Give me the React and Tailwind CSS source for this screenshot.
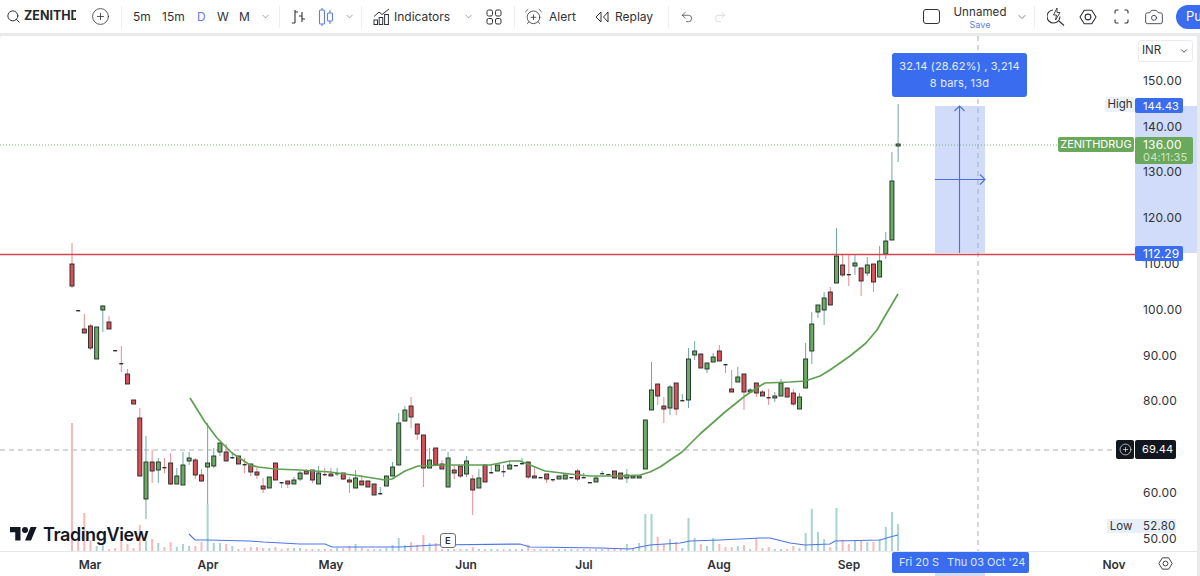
import { Search, CirclePlus, ChevronDown, AlarmClockPlus, Undo2, Redo2, Camera } from "lucide-react";

// [wickTop, bodyTop, bodyBottom, wickBottom, up, volumeTop]
const candles = [
  [243, 264, 286, 288, 0, 423], [310, 310, 311, 311, 0, 540], [314, 329, 333, 333, 0, 513], [324, 326, 348, 350, 0, 540],
  [327, 327, 359, 359, 1, 546], [305, 306, 310, 332, 1, 545], [316, 322, 329, 329, 0, 549], [350, 350, 351, 351, 0, 548],
  [346, 363, 364, 372, 0, 541], [369, 374, 384, 384, 0, 544], [400, 400, 404, 404, 0, 548], [408, 418, 476, 476, 0, 525],
  [436, 462, 499, 519, 1, 541], [450, 462, 471, 483, 0, 539], [458, 462, 470, 483, 1, 543], [458, 467, 468, 473, 0, 547],
  [453, 463, 484, 485, 0, 542], [468, 476, 484, 484, 1, 547], [452, 465, 485, 485, 1, 544], [452, 458, 461, 465, 1, 546],
  [458, 460, 475, 479, 0, 546], [469, 475, 481, 482, 0, 542], [423, 463, 467, 504, 1, 504], [448, 456, 466, 468, 1, 543],
  [443, 443, 452, 456, 1, 543], [444, 452, 461, 461, 0, 544], [452, 457, 458, 459, 1, 546], [456, 456, 464, 464, 0, 549],
  [458, 464, 465, 473, 0, 548], [464, 464, 472, 476, 0, 547], [468, 472, 475, 479, 0, 547], [478, 486, 489, 493, 0, 548],
  [477, 477, 488, 488, 1, 548], [463, 463, 480, 480, 0, 547], [482, 482, 483, 488, 0, 549], [481, 481, 484, 488, 0, 548],
  [477, 480, 484, 484, 1, 548], [471, 473, 479, 481, 1, 548], [469, 471, 474, 474, 0, 549],
  [470, 470, 480, 483, 0, 549], [466, 473, 484, 484, 1, 549], [468, 474, 475, 476, 0, 549], [468, 474, 476, 476, 0, 549],
  [468, 473, 474, 476, 1, 548], [473, 473, 479, 480, 0, 548], [477, 480, 482, 493, 0, 546], [470, 478, 488, 488, 1, 544],
  [475, 481, 485, 485, 0, 548], [481, 481, 487, 487, 0, 549], [484, 484, 495, 495, 0, 549], [487, 493, 494, 495, 1, 549],
  [476, 476, 486, 486, 1, 548], [462, 467, 476, 476, 1, 545], [413, 423, 465, 465, 1, 538], [406, 410, 421, 421, 1, 545],
  [397, 406, 417, 428, 0, 542], [424, 424, 434, 440, 0, 545], [435, 435, 468, 487, 0, 535], [448, 460, 468, 468, 1, 543],
  [448, 448, 465, 465, 0, 543], [460, 464, 469, 469, 0, 549], [452, 458, 487, 487, 1, 549], [465, 470, 473, 479, 0, 549],
  [466, 466, 476, 478, 0, 549], [456, 461, 474, 477, 1, 549], [475, 479, 490, 515, 0, 547], [469, 478, 488, 488, 1, 549],
  [465, 465, 482, 482, 0, 549], [465, 472, 473, 474, 1, 549], [465, 465, 471, 471, 1, 549], [465, 471, 472, 477, 0, 549],
  [462, 465, 469, 469, 1, 549], [465, 465, 466, 466, 1, 549], [458, 463, 464, 464, 1, 549], [462, 462, 477, 479, 0, 545],
  [467, 476, 478, 478, 0, 549], [477, 477, 478, 478, 1, 549], [474, 474, 479, 483, 0, 549], [479, 479, 480, 482, 0, 549],
  [476, 476, 479, 479, 1, 549], [475, 475, 479, 479, 1, 549], [477, 477, 478, 478, 1, 549], [469, 471, 479, 481, 0, 549],
  [473, 477, 478, 478, 1, 549], [482, 482, 483, 483, 0, 549], [476, 478, 482, 482, 1, 549], [471, 473, 474, 474, 1, 549],
  [474, 474, 475, 475, 0, 549], [471, 471, 478, 478, 0, 549], [473, 473, 479, 479, 0, 549], [469, 475, 478, 483, 1, 544],
  [476, 476, 478, 478, 1, 548], [476, 476, 478, 478, 1, 543], [420, 420, 469, 469, 1, 514], [362, 390, 410, 410, 1, 514],
  [384, 384, 396, 405, 0, 537], [397, 406, 409, 423, 0, 544], [385, 387, 408, 415, 1, 539], [383, 383, 409, 415, 0, 542],
  [394, 400, 401, 401, 1, 548], [348, 359, 400, 408, 1, 518], [341, 351, 355, 360, 1, 538], [354, 354, 368, 368, 0, 544],
  [363, 363, 369, 373, 1, 546], [353, 357, 362, 362, 1, 538], [345, 351, 361, 361, 0, 544], [364, 364, 365, 373, 0, 547],
  [370, 389, 392, 392, 0, 547], [367, 377, 382, 382, 1, 546], [374, 374, 392, 410, 0, 545], [388, 390, 392, 392, 1, 549],
  [383, 383, 393, 397, 0, 538], [390, 392, 396, 396, 0, 548], [389, 397, 398, 405, 0, 547], [392, 396, 398, 402, 1, 549],
  [379, 383, 396, 396, 1, 549], [388, 388, 397, 397, 0, 549], [389, 393, 404, 406, 0, 546], [393, 397, 409, 409, 1, 548],
  [343, 359, 388, 388, 1, 533], [312, 324, 351, 364, 1, 509], [305, 305, 312, 318, 1, 532], [292, 298, 310, 325, 1, 539],
  [287, 292, 305, 305, 0, 547], [228, 256, 283, 283, 1, 508], [255, 265, 275, 277, 0, 540], [255, 274, 275, 286, 0, 544],
  [255, 263, 266, 275, 1, 541], [268, 268, 281, 296, 0, 540], [257, 265, 273, 276, 1, 542], [264, 264, 282, 292, 0, 542],
  [246, 261, 277, 277, 1, 539], [232, 241, 254, 259, 1, 527], [152, 181, 240, 240, 1, 512], [104, 144, 146, 162, 1, 524],
];

const greenMa = "M190,398 L205,422 L217,438 L232,453 L250,465 L258,467 L275,469 L300,470 L330,472 L360,476 L385,480 L392,479 L405,471 L418,466 L425,466 L440,465 L490,465 L510,461 L520,461 L530,465 L545,471 L570,474 L590,476 L620,476 L640,475 L650,472 L660,467 L682,452 L700,434 L725,412 L745,396 L760,386 L765,383 L790,382 L805,381 L820,376 L830,370 L850,356 L866,343 L877,330 L885,316 L898,294";
const blueMa = "M189,534 L195,540 L207,540 L250,541 L263,542 L300,544 L325,544 L332,547 L400,547 L435,545 L520,544 L530,547 L600,548 L630,549 L645,546 L650,545 L680,543 L690,541 L720,540 L760,538 L770,538 L790,543 L805,545 L830,544 L835,541 L880,540 L890,537 L898,535";

const ticks = [
  ["150.00", "top-[38px]"],
  ["140.00", "top-[84px]"],
  ["130.00", "top-[129px]"],
  ["120.00", "top-[175px]"],
  ["110.00", "top-[221px]"],
  ["100.00", "top-[267px]"],
  ["90.00", "top-[313px]"],
  ["80.00", "top-[358px]"],
  ["60.00", "top-[450px]"],
  ["50.00", "top-[496px]"],
];

const months = [
  ["Mar", "left-[90px]"],
  ["Apr", "left-[208px]"],
  ["May", "left-[331px]"],
  ["Jun", "left-[466px]"],
  ["Jul", "left-[584px]"],
  ["Aug", "left-[719px]"],
  ["Sep", "left-[849px]"],
  ["Nov", "left-[1114px]"],
];

function Chart() {
  return (
    <svg viewBox="0 36 1135 515" className="block w-[1135px] h-[515px]">
      <rect x="935" y="106" width="50" height="147" fill="#d0dcfa" />
      <line x1="0" x2="1058" y1="145" y2="145" stroke="#7fb079" strokeDasharray="1 2" />
      <line x1="0" x2="1116" y1="450" y2="450" stroke="#a9adb5" strokeDasharray="5 4" />
      <line x1="978" x2="978" y1="36" y2="551" stroke="#a9adb5" strokeDasharray="5 4" />

      {candles.map((c, i) => {
        const x = 72 + i * 6.165;
        return (
          <rect key={i} x={x - 1} y={c[5]} width="2" height={551 - c[5]} fill={c[4] ? "#a8d4cf" : "#f8bab8"} />
        );
      })}
      <path d={blueMa} fill="none" stroke="#4d74e6" strokeWidth="1.1" />

      {candles.map((c, i) => {
        const x = 72 + i * 6.165;
        const flat = c[2] - c[1] <= 1;
        return (
          <g key={i}>
            <line x1={x} x2={x} y1={c[0]} y2={c[3]} stroke={c[4] ? "#6fa8a0" : "#e98a90"} />
            {flat ? (
              <rect x={x - 2} y={c[1]} width="4" height="1.4" fill="#2b2f36" />
            ) : (
              <rect x={x - 2} y={c[1]} width="4" height={c[2] - c[1]} fill={c[4] ? "#6bab63" : "#d9505b"} stroke="#1f2a24" strokeWidth="0.9" />
            )}
          </g>
        );
      })}

      <path d={greenMa} fill="none" stroke="#5fa052" strokeWidth="1.7" strokeLinejoin="round" />
      <line x1="0" x2="1135" y1="254.5" y2="254.5" stroke="#d4434e" strokeWidth="1.6" />

      <g stroke="#4a6fe3" fill="none" strokeWidth="1.1">
        <line x1="959.5" x2="959.5" y1="106" y2="253" />
        <line x1="935" x2="985" y1="179.5" y2="179.5" />
        <path d="M954.5,111 L959.5,106 L964.5,111" />
        <path d="M980,174.5 L985,179.5 L980,184.5" />
      </g>
    </svg>
  );
}

function Divider() {
  return <div className="w-px h-[22px] bg-[#eceef1]" />;
}

function HexGear({ size = 18 }) {
  return (
    <svg width={size} height={size} viewBox="0 0 18 18" fill="none" stroke="#2f3237" strokeWidth="1.1">
      <path d="M5.2,2.2 L12.8,2.2 L17,9 L12.8,15.8 L5.2,15.8 L1,9 Z" strokeLinejoin="round" />
      <circle cx="9" cy="9" r="2.9" />
    </svg>
  );
}

function Toolbar() {
  return (
    <div className="h-[33px] bg-white flex items-center text-[12px] text-[#2f3237] shrink-0 overflow-hidden [&>*]:shrink-0 whitespace-nowrap">
      <Search size={15} strokeWidth={1.6} className="ml-[6px]" />
      <div className="ml-[3px] w-[52px] overflow-hidden font-bold text-[12.5px] text-[#25282d]">ZENITHD</div>
      <CirclePlus size={19} strokeWidth={1} className="ml-[15px]" />
      <div className="ml-[11px]"><Divider /></div>
      <span className="ml-[11px] w-[18px]">5m</span>
      <span className="ml-[11px] w-[26px]">15m</span>
      <span className="ml-[9px] w-[10px] text-[#5d7fe6]">D</span>
      <span className="ml-[10px] w-[12px]">W</span>
      <span className="ml-[10px] w-[11px]">M</span>
      <ChevronDown size={11} strokeWidth={1.5} className="ml-[10px] text-[#777]" />
      <div className="ml-[8px]"><Divider /></div>
      <svg width="15" height="18" viewBox="0 0 15 18" fill="none" stroke="#2f3237" strokeWidth="1.1" className="ml-[11px]">
        <path d="M4,2 V15 M4,4 H7 M1,15 H4 M11,4 V14 M8,8 H11 M11,11 H14" />
      </svg>
      <svg width="16" height="20" viewBox="0 0 16 20" fill="none" stroke="#5d7fe6" strokeWidth="1.1" className="ml-[12px]">
        <path d="M4,1 V3 M4,17 V19 M12,3 V6 M12,14 V17" />
        <rect x="1.5" y="3" width="5" height="14" rx="1" />
        <rect x="9.5" y="6" width="5" height="8" rx="1" />
      </svg>
      <ChevronDown size={11} strokeWidth={1.5} className="ml-[10px] text-[#777]" />
      <div className="ml-[6px]"><Divider /></div>
      <svg width="17" height="17" viewBox="0 0 17 17" fill="none" stroke="#2f3237" strokeWidth="1" className="ml-[11px]">
        <path d="M1,8.5 L6,4 L9,6.5 L16,1" />
        <rect x="1" y="12" width="3.5" height="4.5" />
        <rect x="6.2" y="9.5" width="3.5" height="7" />
        <rect x="11.6" y="6.5" width="3.8" height="10" />
      </svg>
      <span className="ml-[4px] w-[57px]">Indicators</span>
      <ChevronDown size={11} strokeWidth={1.5} className="ml-[12px] text-[#777]" />
      <svg width="16" height="16" viewBox="0 0 16 16" fill="none" stroke="#2f3237" strokeWidth="1" className="ml-[12px]">
        <rect x="1" y="1" width="5.5" height="6" rx="1.5" />
        <rect x="9.5" y="1" width="5.5" height="6" rx="1.5" />
        <rect x="1" y="9.5" width="5.5" height="5.5" rx="1.5" />
        <rect x="9.5" y="9.5" width="5.5" height="5.5" rx="1.5" />
      </svg>
      <div className="ml-[12px]"><Divider /></div>
      <AlarmClockPlus size={19} strokeWidth={1} className="ml-[9px]" />
      <span className="ml-[6px] w-[27px]">Alert</span>
      <svg width="14" height="12" viewBox="0 0 14 12" fill="none" stroke="#2f3237" strokeWidth="1" className="ml-[19px]">
        <path d="M6,1 L1,6 L6,11 M13,1 L8.5,6 L13,11 L13,1 M6,1 L6,11" strokeLinejoin="round" />
      </svg>
      <span className="ml-[6px] w-[39px]">Replay</span>
      <div className="ml-[14px]"><Divider /></div>
      <Undo2 size={14} strokeWidth={1.2} className="ml-[11px]" />
      <Redo2 size={14} strokeWidth={1.2} className="ml-[19px] text-[#c9ccd1]" />

      <div className="ml-[196px] w-[17px] h-[15px] rounded-[3px] border border-[#2f3237]" />
      <div className="ml-[13px] w-[54px] flex flex-col items-center leading-none pt-[3px]">
        <span className="text-[11.5px] tracking-[0.1px]">Unnamed</span>
        <span className="text-[9px] text-[#5d7fe6] mt-[1px]">Save</span>
      </div>
      <ChevronDown size={12} strokeWidth={1.5} className="ml-[9px] text-[#555]" />
      <div className="ml-[6px]"><Divider /></div>
      <svg width="18" height="19" viewBox="0 0 18 19" fill="none" stroke="#2f3237" strokeWidth="1.1" className="ml-[12px]">
        <path d="M6,3 A6.5,6.5 0 1 0 13,9.5" />
        <path d="M12,14 L17,18.5" />
        <path d="M10,1 L6.5,8 H9.5 L8.5,13 L13,5.5 H10 Z" fill="none" strokeWidth="0.9" />
      </svg>
      <div className="ml-[14px]"><HexGear /></div>
      <svg width="15" height="15" viewBox="0 0 15 15" fill="none" stroke="#2f3237" strokeWidth="1.1" className="ml-[17px]">
        <path d="M1,4.5 V2.5 A1.5,1.5 0 0 1 2.5,1 H4.5 M10.5,1 H12.5 A1.5,1.5 0 0 1 14,2.5 V4.5 M14,10.5 V12.5 A1.5,1.5 0 0 1 12.5,14 H10.5 M4.5,14 H2.5 A1.5,1.5 0 0 1 1,12.5 V10.5" />
      </svg>
      <Camera size={20} strokeWidth={1} className="ml-[15px]" />
      <div className="ml-[12px] h-[24px] w-[60px] rounded-l-full bg-[#3a6cf0] text-white text-[13px] pl-[10px] flex items-center">Publish</div>
    </div>
  );
}

function PriceAxis() {
  return (
    <div className="relative w-[62px] text-[12px] text-[#2f3237] text-left">
      <div className="absolute left-0 top-[70px] w-full h-[147px] bg-[#d0dcfa]" />
      {ticks.map(([label, pos]) => (
        <div key={label} className={`absolute left-[8px] leading-[14px] tracking-[0.2px] ${pos}`}>{label}</div>
      ))}

      <div className="absolute left-[3px] top-[4px] w-[55px] h-[22px] bg-white border border-[#e8eaee] rounded-[3px] flex items-center justify-between px-[3px]">
        <span className="text-[11.5px]">INR</span>
        <ChevronDown size={10} strokeWidth={2} />
      </div>

      <div className="absolute left-0 top-[62px] w-[48px] h-[15px] pl-[8px] bg-[#3a6cf0] text-white text-[11px] rounded-[2px] leading-[16px] tracking-[0.1px]">144.43</div>
      <div className="absolute left-0 top-[101px] w-[58px] h-[27px] bg-[#6aa95c] text-white rounded-[2px] leading-[13px] pt-[1px] pl-[8px] tracking-[0.2px]">
        <div>136.00</div>
        <div className="text-[#cfe5c8] text-[11px]">04:11:35</div>
      </div>
      <div className="absolute left-0 top-[210px] w-[48px] h-[15px] pl-[8px] bg-[#3a6cf0] text-white rounded-[2px] leading-[16px] tracking-[0.2px]">112.29</div>
      <div className="absolute left-0 top-[404px] w-[41px] h-[19px] pl-[7px] bg-[#12161d] text-white text-[11px] rounded-[2px] leading-[19px] tracking-[0.1px]">69.44</div>
      <div className="absolute left-0 top-[483px] w-[41px] h-[14px] pl-[8px] bg-[#e9effa] text-[11.5px] leading-[14px] tracking-[0.2px]">52.80</div>
    </div>
  );
}

export default function App() {
  return (
    <div className="w-[1200px] h-[576px] overflow-hidden bg-[#e9eaec] flex flex-col font-['Inter',sans-serif]">
      <Toolbar />
      <div className="h-[3px] shrink-0" />
      <div className="mr-[3px] bg-white flex flex-col flex-1 rounded-tl-[3px]">
        <div className="flex h-[515px] shrink-0 relative">
          <div className="relative w-[1135px]">
            <Chart />

            <div className="absolute left-[892px] top-[17px] w-[135px] h-[44px] bg-[#3a6cf0] rounded-[3px] text-[#e6ecff] text-center text-[11px] leading-[17px] pt-[5px] tracking-[0.2px]">
              <div>32.14 (28.62%) , 3,214</div>
              <div>8 bars, 13d</div>
            </div>

            <div className="absolute left-[1058px] top-[101px] w-[76px] h-[15px] bg-[#6aa95c] text-white text-[11px] leading-[15px] text-center rounded-[2px]">ZENITHDRUG</div>
            <div className="absolute left-[1105px] top-[61px] w-[30px] h-[15px] bg-[#edf1fa] text-[#2f3237] text-[11.5px] leading-[15px] text-center">High</div>
            <div className="absolute left-[1107px] top-[483px] w-[28px] h-[14px] bg-[#e9effa] text-[#2f3237] text-[11.5px] leading-[14px] text-center">Low</div>

            <div className="absolute left-[1116px] top-[404px] w-[18px] h-[19px] bg-[#12161d] rounded-[2px] flex items-center justify-center">
              <CirclePlus size={13} strokeWidth={1.2} className="text-white" />
            </div>

            <div className="absolute left-[10px] top-[488px] flex items-center gap-[6px]">
              <svg width="27" height="21" viewBox="0 0 36 28" fill="#131722">
                <path d="M14 22H7V11H0V4h14v18zM28 22h-8l7.5-18h8L28 22z" />
                <circle cx="20" cy="8" r="4" />
              </svg>
              <span className="text-[18px] font-semibold text-[#131722] tracking-[-0.4px] leading-none">TradingView</span>
            </div>

            <div className="absolute left-[440px] top-[497px] w-[16px] h-[15px] bg-white border border-[#6b6f76] rounded-[3px] text-[9.5px] font-semibold text-[#2f3237] text-center leading-[13px]">E</div>
          </div>
          <PriceAxis />
        </div>

        <div className="relative flex-1 border-t border-[#e4e6ea] text-[12px] font-semibold text-[#2f3237]">
          {months.map(([label, pos]) => (
            <span key={label} className={`absolute top-[4px] -translate-x-1/2 ${pos}`}>{label}</span>
          ))}
          <div className="absolute left-[935px] top-[20px] w-[50px] h-[5px] bg-[#d0dcfa]" />
          <div className="absolute left-[892px] top-0 w-[137px] h-[21px] bg-[#3a6cf0] rounded-[2px] text-[#dde6ff] text-[11px] font-normal flex items-center pl-[7px] gap-[8px] whitespace-nowrap">
            <span>Fri 20 S</span>
            <span>Thu 03 Oct &apos;24</span>
          </div>
          <div className="absolute left-[1158px] top-[4px]"><HexGear size={15} /></div>
        </div>
      </div>
    </div>
  );
}
